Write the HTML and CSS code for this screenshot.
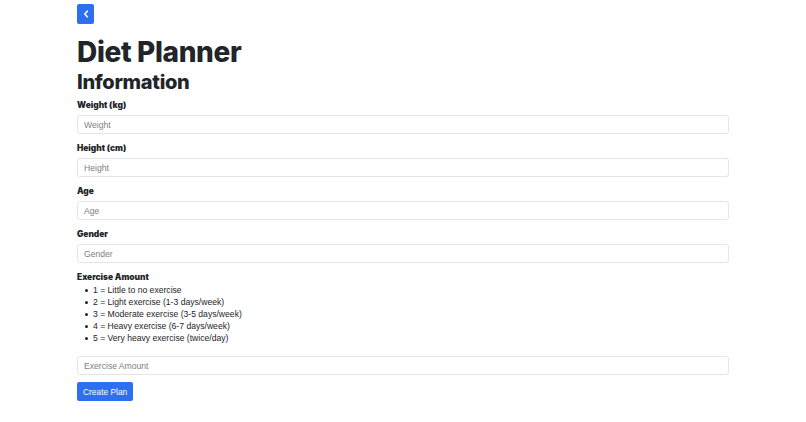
FILE: index.html
```html
<!DOCTYPE html>
<html lang="en">
<head>
<meta charset="utf-8">
<title>Diet Planner</title>
<link rel="stylesheet" href="styles.css">
</head>
<body>
<div class="container">
  <button class="back-btn" aria-label="Back">
    <svg width="6" height="8" viewBox="0 0 6 8"><path d="M4.3 1.2 L1.8 4 L4.3 6.8" fill="none" stroke="#fff" stroke-width="1.6" stroke-linecap="round" stroke-linejoin="round"/></svg>
  </button>
  <h1 class="title">Diet Planner</h1>
  <h2 class="subtitle">Information</h2>
  <div class="field">
    <label class="label">Weight (kg)</label>
    <input class="input" placeholder="Weight">
  </div>
  <div class="field">
    <label class="label">Height (cm)</label>
    <input class="input" placeholder="Height">
  </div>
  <div class="field">
    <label class="label">Age</label>
    <input class="input" placeholder="Age">
  </div>
  <div class="field">
    <label class="label">Gender</label>
    <input class="input" placeholder="Gender">
  </div>
  <div class="field">
    <label class="label">Exercise Amount</label>
    <ul class="levels">
      <li>1 = Little to no exercise</li>
      <li>2 = Light exercise (1-3 days/week)</li>
      <li>3 = Moderate exercise (3-5 days/week)</li>
      <li>4 = Heavy exercise (6-7 days/week)</li>
      <li>5 = Very heavy exercise (twice/day)</li>
    </ul>
    <input class="input" placeholder="Exercise Amount">
  </div>
  <button class="primary-btn">Create Plan</button>
</div>
</body>
</html>
```
FILE: styles.css
```css
* { box-sizing: border-box; }
body {
  margin: 0;
  background: #fff;
  color: #212529;
  font-family: Inter, "Noto Sans", sans-serif;
}
.container {
  width: 652px;
  margin: 0 auto;
  padding-top: 4px;
  display: flex;
  flex-direction: column;
  align-items: flex-start;
}
.back-btn {
  width: 17px;
  height: 20px;
  padding: 0;
  border: none;
  border-radius: 2px;
  background: #2d6ff0;
  display: flex;
  align-items: center;
  justify-content: center;
}
.title {
  margin: 11px 0 0;
  font-size: 28px;
  line-height: 34px;
  font-weight: 800;
  letter-spacing: -0.35px;
}
.subtitle {
  margin: 1px 0 0;
  font-size: 20px;
  line-height: 24px;
  font-weight: 800;
  letter-spacing: -0.3px;
}
.field {
  width: 100%;
  margin-top: 5px;
  margin-bottom: 3px;
  display: flex;
  flex-direction: column;
}
.label {
  font-size: 8.4px;
  line-height: 12px;
  font-weight: 900;
  margin-bottom: 4px;
}
.input {
  width: 100%;
  height: 19px;
  border: 1px solid #e3e5e8;
  border-radius: 3px;
  padding: 0 6px;
  font-family: "Liberation Sans", Arial, sans-serif;
  font-size: 8.6px;
  color: #212529;
  background: #fff;
}
.input::placeholder { color: #7b7f85; }
.levels {
  list-style: none;
  margin: -3px 0 12px;
  padding-left: 8px;
  font-family: "Liberation Sans", Arial, sans-serif;
  font-size: 8.6px;
  line-height: 12px;
}
.levels li {
  display: flex;
  align-items: center;
}
.levels li::before {
  content: "";
  width: 3px;
  height: 3px;
  border-radius: 50%;
  background: #212529;
  margin-right: 5px;
  flex: none;
}
.primary-btn {
  margin-top: 4px;
  height: 19px;
  padding: 0 6px;
  border: none;
  border-radius: 2px;
  background: #2d6ff0;
  color: #fff;
  font-family: "Liberation Sans", Arial, sans-serif;
  font-size: 8.4px;
}
```
